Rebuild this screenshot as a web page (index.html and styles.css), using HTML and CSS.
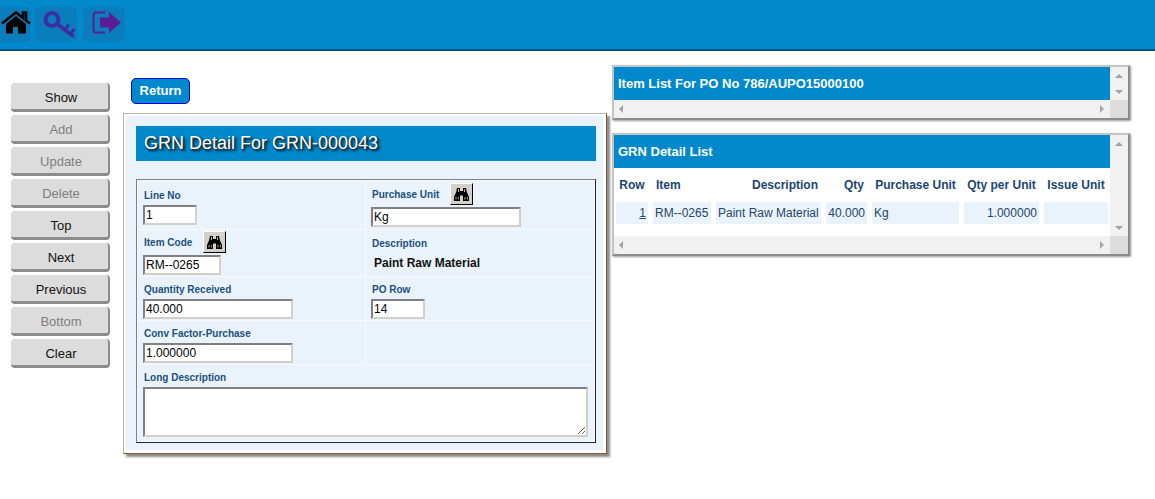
FILE: index.html
```html
<!DOCTYPE html>
<html lang="en">
<head>
    <meta charset="UTF-8">
    <meta name="viewport" content="width=device-width, initial-scale=1.0">
    <title>GRN Detail</title>
    <link rel="stylesheet" href="styles.css">
</head>
<body>
    <svg class="defs" width="0" height="0">
        <symbol id="binoculars" viewBox="0 0 15 13">
            <path d="M3 0h3v3h3V0h3l.8 4L15 9v4H9V7.500H6V13H0V9l2.200-5z" fill="#000"/>
            <path d="M1.500 9h1v2.500h-1zM4 9h.8v2.500H4zM10.500 9h1v2.500h-1zM13 9h.8v2.500H13zM4 1h1v3H4zM10 1h1v3h-1z" fill="#fff" opacity=".7"/>
        </symbol>
    </svg>

    <header class="topbar">
        <a class="tile tile-home" href="#">
            <svg width="31" height="35" viewBox="0 7 31 35">
                <path d="M2 23.500 16 12.500l7 5.500v-5.500h3V20.500l4 3" fill="none" stroke="#000" stroke-width="2.600"/>
                <path d="M6 24 16 16l10 8v9.500h-8V27h-5v6.500H6z" fill="#000"/>
            </svg>
        </a>
        <a class="tile tile-key" href="#">
            <svg width="42" height="35" viewBox="35 7 42 35">
                <g fill="none" stroke="#3d2ea3">
                    <circle cx="52" cy="19.500" r="6.500" stroke-width="4"/>
                    <path d="M57 24 72.500 35.500" stroke-width="3.800" stroke-linecap="round"/>
                    <path d="M64.500 30 69 24.500M70 34 74.500 29" stroke-width="3"/>
                </g>
            </svg>
        </a>
        <a class="tile tile-exit" href="#">
            <svg width="42" height="35" viewBox="83 7 42 35">
                <path d="M105 12.500H96q-2.500 0-2.500 2.500v15q0 2.500 2.500 2.500h9" fill="none" stroke="#5b1e96" stroke-width="2"/>
                <path d="M100 17.500h9V12l12 10.500L109 33v-5.500h-9z" fill="#5b1e96"/>
            </svg>
        </a>
    </header>

    <main class="layout">
        <nav class="sidebar">
            <button class="side-btn">Show</button>
            <button class="side-btn" disabled>Add</button>
            <button class="side-btn" disabled>Update</button>
            <button class="side-btn" disabled>Delete</button>
            <button class="side-btn">Top</button>
            <button class="side-btn">Next</button>
            <button class="side-btn">Previous</button>
            <button class="side-btn" disabled>Bottom</button>
            <button class="side-btn">Clear</button>
        </nav>

        <section class="center">
            <button class="return-btn">Return</button>
            <div class="detail-panel">
                <div class="detail-sheet">
                    <h1 class="detail-title">GRN Detail For GRN-000043</h1>
                    <div class="form-table">
                        <div class="cell cell-line">
                            <label class="field-label">Line No</label>
                            <input class="field w-short" value="1">
                        </div>
                        <div class="cell cell-lookup-top">
                            <div class="label-row">
                                <label class="field-label">Purchase Unit</label>
                                <button class="lookup-btn lookup-unit"><svg width="15" height="13"><use href="#binoculars"/></svg></button>
                            </div>
                            <input class="field w-long field-lookup" value="Kg">
                        </div>
                        <div class="cell cell-lookup-item">
                            <div class="label-row">
                                <label class="field-label">Item Code</label>
                                <button class="lookup-btn lookup-item"><svg width="15" height="13"><use href="#binoculars"/></svg></button>
                            </div>
                            <input class="field w-mid field-lookup" value="RM--0265">
                        </div>
                        <div class="cell cell-desc">
                            <label class="field-label">Description</label>
                            <div class="desc-value">Paint Raw Material</div>
                        </div>
                        <div class="cell">
                            <label class="field-label">Quantity Received</label>
                            <input class="field w-long" value="40.000">
                        </div>
                        <div class="cell">
                            <label class="field-label">PO Row</label>
                            <input class="field w-short" value="14">
                        </div>
                        <div class="cell">
                            <label class="field-label">Conv Factor-Purchase</label>
                            <input class="field w-long" value="1.000000">
                        </div>
                        <div class="cell"></div>
                        <div class="cell cell-wide">
                            <label class="field-label">Long Description</label>
                            <textarea class="field long-text"></textarea>
                        </div>
                    </div>
                </div>
            </div>
        </section>

        <section class="lists">
            <div class="list-panel">
                <div class="list-body">
                    <div class="list-title">Item List For PO No 786/AUPO15000100</div>
                </div>
                <div class="vbar"><span class="arrow arrow-up"></span><span class="arrow arrow-down"></span></div>
                <div class="hbar"><span class="arrow arrow-left"></span><span class="arrow arrow-right"></span></div>
                <div class="corner"></div>
            </div>

            <div class="list-panel">
                <div class="list-body">
                    <div class="list-title">GRN Detail List</div>
                    <table class="grid">
                        <thead>
                            <tr>
                                <th class="col-row center-text">Row</th>
                                <th class="col-item">Item</th>
                                <th class="col-desc num">Description</th>
                                <th class="col-qty num">Qty</th>
                                <th class="col-unit center-text">Purchase Unit</th>
                                <th class="col-per center-text">Qty per Unit</th>
                                <th class="col-issue center-text">Issue Unit</th>
                            </tr>
                        </thead>
                        <tbody>
                            <tr>
                                <td class="num"><a href="#">1</a></td>
                                <td>RM--0265</td>
                                <td>Paint Raw Material</td>
                                <td class="num">40.000</td>
                                <td>Kg</td>
                                <td class="num">1.000000</td>
                                <td></td>
                            </tr>
                        </tbody>
                    </table>
                </div>
                <div class="vbar"><span class="arrow arrow-up"></span><span class="arrow arrow-down"></span></div>
                <div class="hbar"><span class="arrow arrow-left"></span><span class="arrow arrow-right"></span></div>
                <div class="corner"></div>
            </div>
        </section>
    </main>
</body>
</html>
```

FILE: styles.css
```css
body {
    font-family: "Liberation Sans", Arial, sans-serif;
    background-color: #fff;
    margin: 0;
    height: 499px;
    overflow: hidden;
}

.defs {
    display: block;
    height: 0;
}

.topbar {
    display: flex;
    align-items: flex-start;
    box-sizing: border-box;
    height: 51px;
    padding-top: 7px;
    background-color: #0088cc;
    border-bottom: 2px solid #00537f;
}

.tile {
    display: block;
    height: 35px;
    background-color: #0a7dbd;
    border-radius: 5px;
}

.tile svg {
    display: block;
}

.tile-home {
    width: 31px;
    margin-right: 4px;
    border-radius: 0 5px 5px 0;
}

.tile-key {
    width: 42px;
    margin-right: 6px;
}

.tile-exit {
    width: 42px;
}

.layout {
    display: flex;
    align-items: flex-start;
}

/* left button column */
.sidebar {
    display: flex;
    flex-direction: column;
    gap: 3px;
    box-sizing: border-box;
    width: 123px;
    padding: 32px 0 0 11px;
}

.side-btn {
    box-sizing: border-box;
    width: 99px;
    height: 29px;
    padding: 2px 0 0 3px;
    font-family: inherit;
    font-size: 13px;
    color: #111;
    background-color: #dcdcdc;
    border: none;
    border-right: 2px solid #8c8c8c;
    border-bottom: 3px solid #8c8c8c;
    border-radius: 4px;
}

.side-btn:disabled {
    color: #808080;
}

/* middle form */
.center {
    box-sizing: border-box;
    width: 489px;
    padding-top: 27px;
}

.return-btn {
    display: block;
    box-sizing: border-box;
    width: 59px;
    height: 26px;
    margin-left: 8px;
    padding: 0 0 2px;
    font-family: inherit;
    font-size: 13px;
    font-weight: bold;
    color: #fff;
    background-color: #0088cc;
    border: 1px solid #0000e0;
    border-radius: 5px;
}

.detail-panel {
    box-sizing: border-box;
    width: 484px;
    margin-top: 9px;
    padding: 2px 3px 3px 2px;
    background-color: #fff;
    border: 1px solid #b5b5b5;
    border-right-color: #8b5a2b;
    border-bottom-color: #8b5a2b;
    box-shadow: 3px 3px 2px #8c8c8c;
}

.detail-sheet {
    padding: 10px 7px 7px 10px;
    background-color: #eaf3fb;
}

.detail-title {
    height: 35px;
    margin: 0 0 18px;
    padding-left: 8px;
    font-size: 18px;
    font-weight: normal;
    line-height: 34px;
    color: #fff;
    background-color: #0088cc;
    text-shadow: 2px 2px 3px #111, 1px 1px 2px #333;
}

.form-table {
    display: grid;
    grid-template-columns: 227px 1fr;
    grid-template-rows: 48px 46px 43px 43px 76px;
    gap: 1px;
    padding: 1px;
    background-color: #f6fafd;
    border: 1px solid #808080;
    border-right-color: #223;
    border-bottom-color: #223;
}

.cell {
    box-sizing: border-box;
    padding: 6px 0 0 5px;
    background-color: #eaf3fb;
}

.cell-line {
    padding-top: 8px;
}

.cell-lookup-top {
    padding-top: 2px;
}

.cell-lookup-item {
    padding-top: 1px;
}

.cell-desc {
    padding-top: 7px;
}

.cell-wide {
    grid-column: 1 / 3;
}

.field-label {
    display: block;
    height: 13px;
    padding-left: 1px;
    font-size: 10px;
    font-weight: bold;
    line-height: 13px;
    color: #1a5080;
}

.label-row {
    display: flex;
    align-items: center;
    height: 22px;
}

.lookup-btn {
    box-sizing: border-box;
    display: flex;
    align-items: center;
    justify-content: center;
    width: 23px;
    height: 22px;
    padding: 0;
    background-color: #d4d0c8;
    border: 1px solid #000;
    border-top-color: #fff;
    border-left-color: #fff;
}

.lookup-unit {
    margin-left: 11px;
}

.lookup-item {
    margin-left: 11px;
}

.field {
    display: block;
    box-sizing: border-box;
    height: 20px;
    margin-top: 3px;
    padding: 0 2px 0 1px;
    font-family: inherit;
    font-size: 12px;
    color: #000;
    background-color: #fff;
    border: 2px solid #808080;
    border-right-color: #d4d0c8;
    border-bottom-color: #d4d0c8;
    border-radius: 0;
}

.field-lookup {
    margin-top: 2px;
}

.w-short {
    width: 54px;
}

.w-mid {
    width: 78px;
}

.w-long {
    width: 150px;
}

.long-text {
    width: 445px;
    height: 50px;
}

.desc-value {
    margin: 6px 0 0 3px;
    font-size: 12px;
    font-weight: bold;
    line-height: 14px;
    color: #111;
}

/* right lists */
.lists {
    box-sizing: border-box;
    width: 519px;
    padding-top: 14px;
}

.list-panel {
    display: grid;
    grid-template-columns: 496px 18px;
    width: 514px;
    margin-bottom: 13px;
    background-color: #fff;
    border: 2px solid #c4c4c4;
    border-right-color: #8c8c8c;
    border-bottom-color: #8c8c8c;
    box-shadow: 1px 1px 2px #999;
}

.list-title {
    height: 33px;
    padding-left: 4px;
    font-size: 13px;
    font-weight: bold;
    line-height: 34px;
    color: #fff;
    background-color: #0088cc;
}

.vbar {
    display: flex;
    flex-direction: column;
    justify-content: space-between;
    align-items: center;
    padding: 7px 0 6px;
    background-color: #f1f1f1;
}

.hbar {
    display: flex;
    justify-content: space-between;
    align-items: center;
    height: 18px;
    padding: 0 6px 0 5px;
    background-color: #f1f1f1;
}

.corner {
    background-color: #dcdcdc;
}

.arrow {
    display: block;
    width: 0;
    height: 0;
    border: 4px solid transparent;
}

.arrow-up {
    border-top-width: 0;
    border-bottom: 4px solid #a3a3a3;
}

.arrow-down {
    border-bottom-width: 0;
    border-top: 4px solid #a3a3a3;
}

.arrow-left {
    border-left-width: 0;
    border-right: 4px solid #a3a3a3;
}

.arrow-right {
    border-right-width: 0;
    border-left: 4px solid #a3a3a3;
}

.grid {
    table-layout: fixed;
    width: 502px;
    margin: 0 0 12px -3px;
    border-collapse: separate;
    border-spacing: 5px 0;
    font-size: 12px;
    color: #24466b;
}

.grid th {
    height: 34px;
    padding: 0 3px;
    font-weight: bold;
    text-align: left;
    white-space: nowrap;
    color: #1a4570;
}

.grid td {
    height: 22px;
    padding: 0 2px;
    white-space: nowrap;
    background-color: #eaf3fb;
}

.grid a {
    color: #24466b;
}

.grid .num {
    text-align: right;
}

.grid .center-text {
    text-align: center;
}

.col-row { width: 26px; }
.col-item { width: 52px; }
.col-desc { width: 99px; }
.col-qty { width: 35px; }
.col-unit { width: 81px; }
.col-per { width: 69px; }
.col-issue { width: 58px; }
```
